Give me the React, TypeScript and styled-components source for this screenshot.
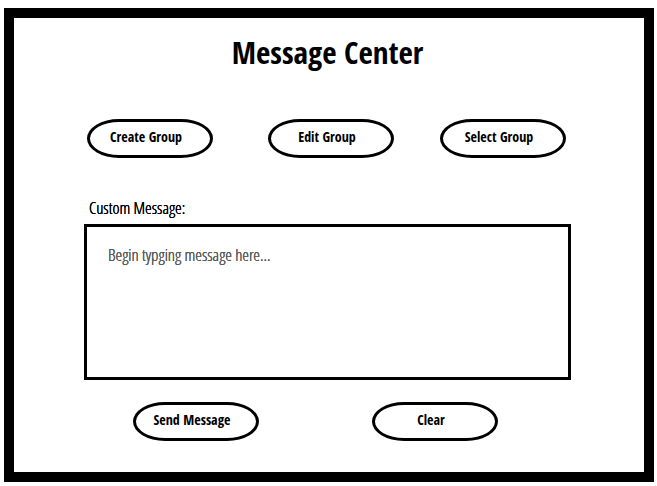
import React, { useState } from "react";
import styled, { createGlobalStyle, css } from "styled-components";

const GlobalStyle = createGlobalStyle`
  * {
    box-sizing: border-box;
  }

  body {
    margin: 0;
    background: #fff;
    color: #000;
    font-family: "Open Sans Condensed", "Liberation Sans", sans-serif;
  }
`;

const messageText = css`
  font-family: "Open Sans Condensed Light", "Open Sans Condensed", "Liberation Sans", sans-serif;
  font-size: 17px;
  line-height: 20px;
  font-weight: 300;
  text-shadow: 0 0 currentColor, 0 0 currentColor;
`;

const Page = styled.div`
  display: flex;
  min-height: 100vh;
  padding: 8px 3px 4px 4px;
`;

const Frame = styled.main`
  flex: 1;
  min-width: 0;
  padding: 16px 73px 30px 70px;
  border: 10px solid #000;
`;

const Title = styled.h1`
  margin: 0;
  font-size: 31px;
  line-height: 36px;
  font-weight: 700;
  text-align: center;
`;

const GroupActions = styled.nav`
  display: grid;
  grid-template-columns: 181fr 172fr 126px;
  margin-top: 49px;
  padding: 0 5px 0 3px;
`;

const PillButton = styled.button`
  width: 126px;
  height: 39px;
  padding: 0 8px 4px 0;
  border: 3px solid #000;
  border-radius: 32px / 50%;
  background: #fff;
  color: #000;
  font-family: inherit;
  font-size: 14px;
  line-height: 16px;
  font-weight: 700;
  white-space: nowrap;
  cursor: pointer;
`;

const MessageForm = styled.form`
  display: flex;
  flex-direction: column;
  margin-top: 40px;
`;

const MessageLabel = styled.label`
  ${messageText}
  padding-left: 5px;
`;

const MessageBox = styled.textarea`
  ${messageText}
  width: 100%;
  height: 156px;
  margin-top: 6px;
  padding: 18px 21px;
  border: 3px solid #000;
  border-radius: 0;
  background: #fff;
  color: #000;
  resize: none;

  &::placeholder {
    color: #5c5c5c;
    opacity: 1;
  }
`;

const FormActions = styled.div`
  display: flex;
  justify-content: space-between;
  margin-top: 22px;
  padding: 0 73px 0 49px;
`;

export default function App() {
  const [message, setMessage] = useState("");

  return (
    <>
      <GlobalStyle />
      <Page>
        <Frame>
          <Title>Message Center</Title>
          <GroupActions aria-label="Groups">
            <PillButton type="button">Create Group</PillButton>
            <PillButton type="button">Edit Group</PillButton>
            <PillButton type="button">Select Group</PillButton>
          </GroupActions>
          <MessageForm onSubmit={(event) => event.preventDefault()}>
            <MessageLabel htmlFor="message">Custom Message:</MessageLabel>
            <MessageBox
              id="message"
              placeholder="Begin typging message here..."
              value={message}
              onChange={(event) => setMessage(event.target.value)}
            />
            <FormActions>
              <PillButton type="submit">Send Message</PillButton>
              <PillButton type="button" onClick={() => setMessage("")}>
                Clear
              </PillButton>
            </FormActions>
          </MessageForm>
        </Frame>
      </Page>
    </>
  );
}
